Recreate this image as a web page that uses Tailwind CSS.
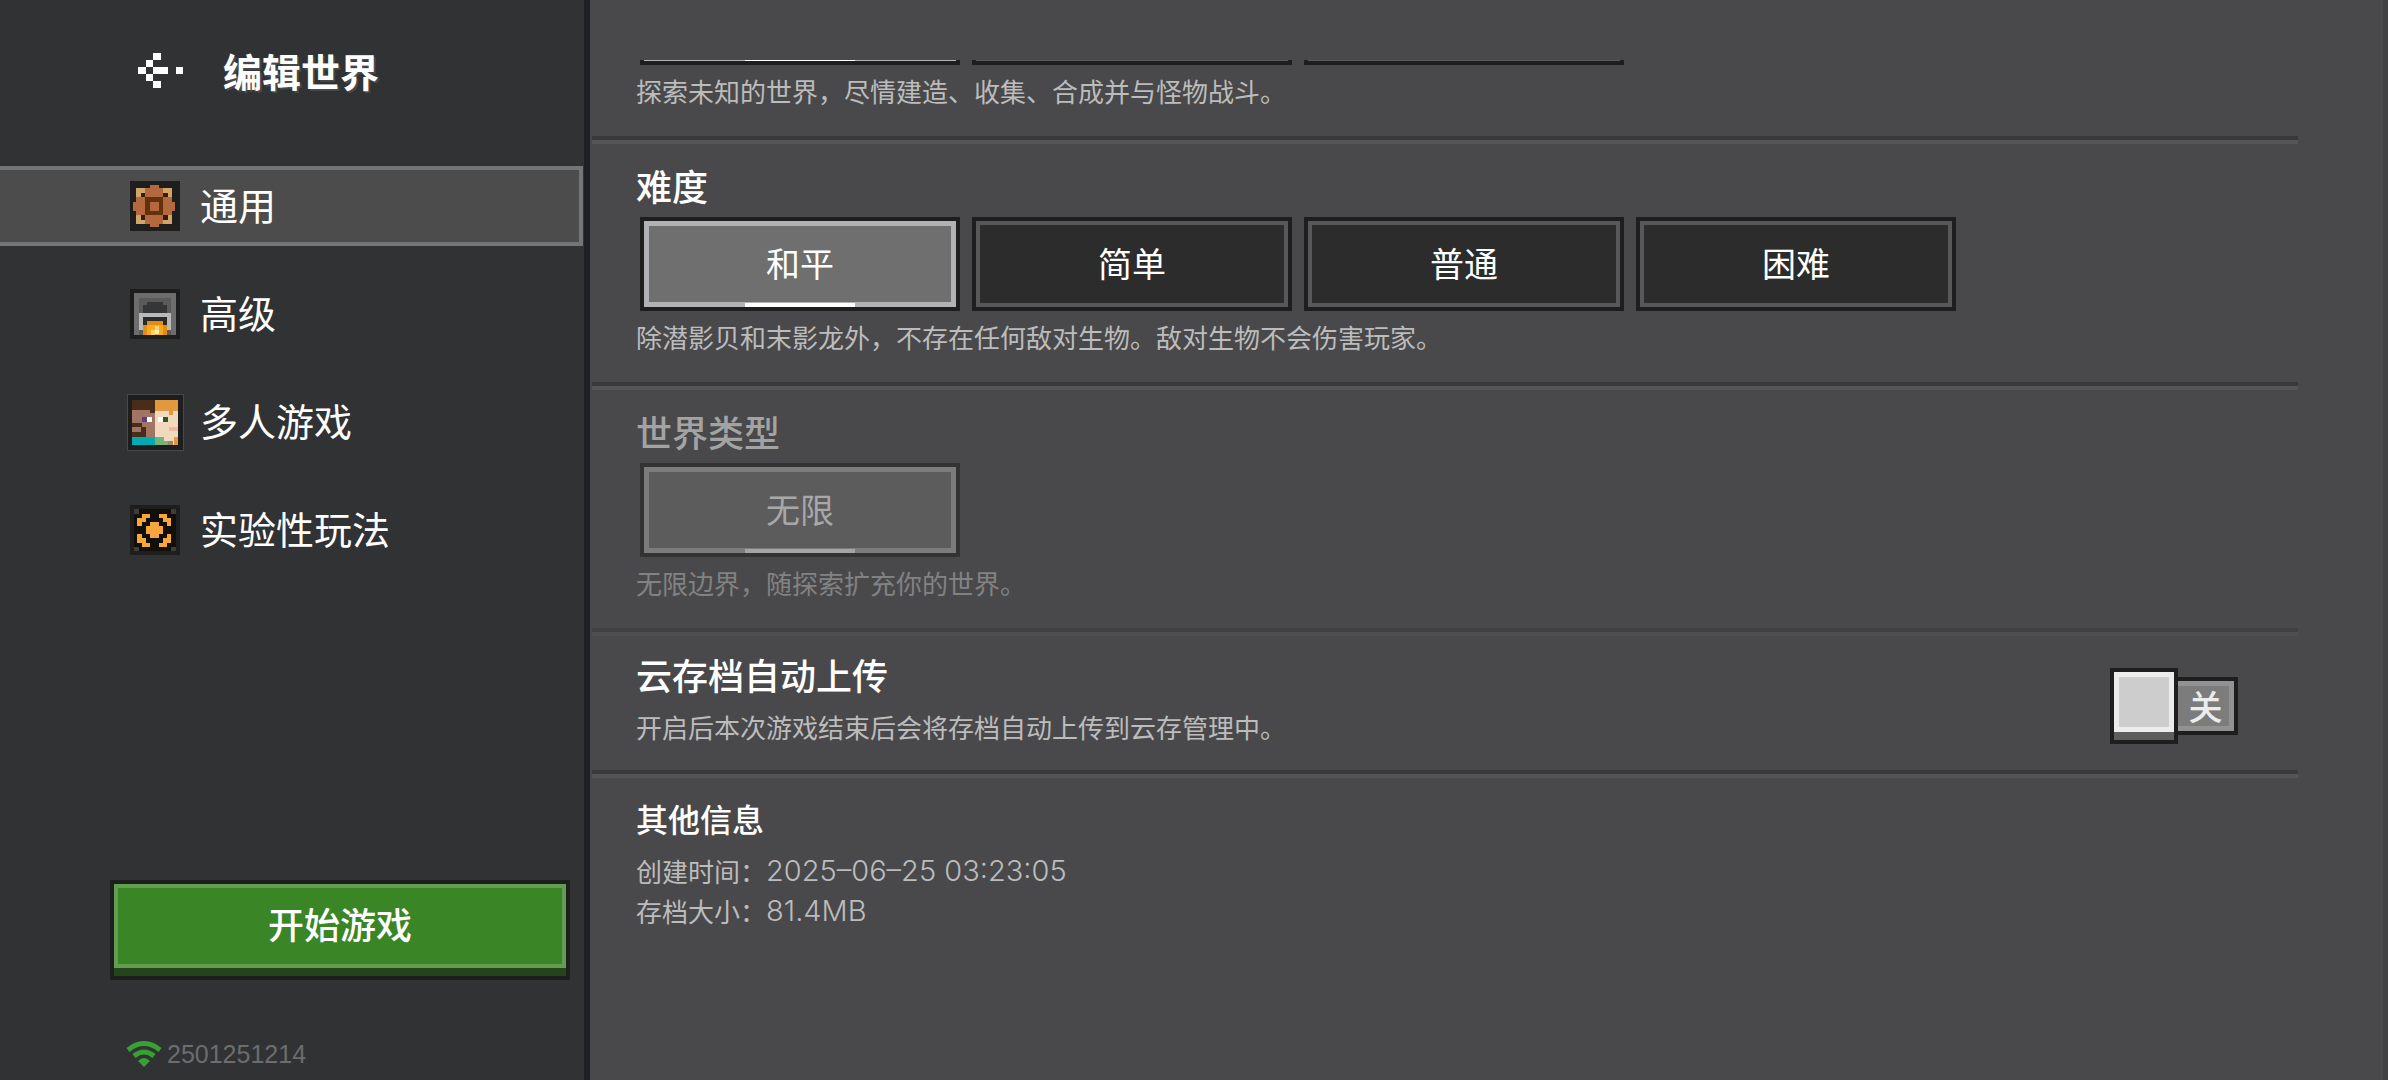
<!doctype html>
<html lang="zh-CN">
<head>
  <meta charset="utf-8"/>
  <meta content="width=device-width, initial-scale=1.0" name="viewport"/>
  <title>编辑世界</title>
  <script src="https://cdn.jsdelivr.net/npm/@tailwindcss/browser@4"></script>
  <style>
    body {
      font-family: 'Noto Sans CJK SC', sans-serif;
    }
  </style>
</head>
<body class="bg-[#49494b] text-white">
  <div class="flex h-screen overflow-hidden">
    <!-- sidebar -->
    <aside class="flex w-[590px] shrink-0 flex-col border-r-6 border-[#1f2026] bg-[#313233]">
      <header class="flex items-center pt-[42px] pb-[68px] pl-[138px]">
        <button aria-label="返回" class="mr-10">
          <svg class="h-[35px] w-[45px]" viewBox="0 0 6 5" preserveAspectRatio="none" shape-rendering="crispEdges" fill="#fff">
            <path d="M2 0h1v1h-1zM1 1h1v1h-1zM0 2h1v1h-1zM2 2h2v1h-2zM5 2h1v1h-1zM1 3h1v1h-1zM2 4h1v1h-1z"/>
          </svg>
        </button>
        <h1 class="text-[39px] leading-14 font-bold [text-shadow:2px_2px_0_#47484a]">编辑世界</h1>
      </header>
      <nav class="flex flex-col gap-7 text-[38px]">
        <a class="mr-px flex h-20 items-center border-y-4 border-r-4 border-[#747575] bg-[#4c4c4c] pl-[130px]" href="#">
          <svg class="mr-5 size-[50px]" viewBox="0 0 150 150" shape-rendering="crispEdges">
            <path fill="#1e1e1e" d="M0 0h150v150H0z"/>
            <path fill="#21140b" d="M18 22h108v108H18z"/>
            <path fill="#d1a567" d="M18 22h27v14H32v13H18zM99 22h27v27h-13V36H99zM18 103h14v13h13v14H18zM113 103h13v27H99v-14h14z"/>
            <path fill="#b3683d" d="M59 13h27v9h13v27h27v13h8v28h-8v13H99v27H86v9H59v-9H45v-27H18V90H8V62h10V49h27V22h14z"/>
            <path fill="#3a1a0a" d="M32 36h13v13H32zM99 36h14v13H99zM32 103h13v13H32zM99 103h14v13H99z"/>
            <path fill="#64310f" d="M45 49h54v54H45z"/>
            <path fill="#b3683d" d="M59 62h27v28H59z"/>
          </svg>
          <span class="pb-1.5">通用</span>
        </a>
        <a class="flex h-20 items-center pl-[130px]" href="#">
          <svg class="mr-5 size-[50px]" viewBox="0 0 150 150" shape-rendering="crispEdges">
            <path fill="#1e1e1e" d="M0 0h150v150H0z"/>
            <path fill="#6d6d6d" d="M12 12h126v126H12z"/>
            <path fill="#5a5a5a" d="M26 26h98v112H26z"/>
            <path fill="#353637" d="M51 39h47v10h14v24H38V49h13z"/>
            <path fill="#b9b9b9" d="M27 73h96v50h-11V85H38v38H27z"/>
            <path fill="#2a2a2b" d="M38 85h74v53H38z"/>
            <path fill="#e58d12" d="M51 97h47v12h14v29H38v-29h13z"/>
            <path fill="#f7ab25" d="M51 109h47v29H51z"/>
            <path fill="#ffd468" d="M62 122h12v-11h12v11h-12v16H62z"/>
            <path fill="#fff0b8" d="M74 122h12v12H74z"/>
          </svg>
          <span class="pb-1.5">高级</span>
        </a>
        <a class="flex h-20 items-center pl-[127px]" href="#">
          <svg class="mr-4 size-[57px]" viewBox="0 0 171 171" shape-rendering="crispEdges">
            <path fill="#474849" d="M0 0h171v171H0z"/>
            <path fill="#1e1e1e" d="M3 3h165v165H3z"/>
            <path fill="#a07562" d="M16 17h69v111H16z"/>
            <path fill="#4a2c1a" d="M16 17h69v41H70V47H16zM16 86h30v12H16zM42 98h14v30H16v-15h26z"/>
            <path fill="#5d3b8e" d="M46 70h14v15H46z"/>
            <path fill="#fff" d="M60 70h16v15H60z"/>
            <path fill="#00abb1" d="M16 128h69v26H16z"/>
            <path fill="#f0d9bd" d="M85 17h69v137H85z"/>
            <path fill="#e1983f" d="M85 17h69v33h-15v12h-13V50H85zM140 128h14v26h-14z"/>
            <path fill="#fff" d="M92 70h16v15H92z"/>
            <path fill="#2f5b1b" d="M108 70h16v15h-16z"/>
            <path fill="#edb8a4" d="M126 98h28v14h-28z"/>
            <path fill="#77b276" d="M85 128h25v14h14v12H85z"/>
            <path fill="#9b8763" d="M124 142h14v12h-14z"/>
          </svg>
          <span class="pb-1.5">多人游戏</span>
        </a>
        <a class="flex h-20 items-center pl-[130px]" href="#">
          <svg class="mr-5 size-[50px]" viewBox="0 0 150 150" shape-rendering="crispEdges">
            <path fill="#1e1e1e" d="M0 0h150v150H0z"/>
            <path fill="#120e09" d="M26 13h98v13h14v99h-14v14H26v-14H12V26h14z"/>
            <path fill="#3f3d38" d="M12 13h15v15H12zM124 13h14v15h-14zM12 125h15v14H12zM124 125h14v14h-14z"/>
            <path fill="#f7a63b" d="M36 28h25v11H49v13H37v12H22V39h14zM86 28h25v11h13v25h-14V52H98V39H86zM22 88h15v12h12v13h12v12H36v-12H22zM110 88h14v25h-13v12H86v-12h12v-13h12zM59 52h27v12h12v24H86v12H59V88H47V64h12z"/>
          </svg>
          <span class="pb-1.5">实验性玩法</span>
        </a>
      </nav>
      <button class="mt-auto mr-[14px] ml-[110px] border-4 border-[#1d1f1c] bg-[#24451c] pb-2">
        <span class="flex h-[84px] items-center justify-center border-4 border-[#639d52] bg-[#3a8526] pb-1.5 text-4xl font-medium">开始游戏</span>
      </button>
      <footer class="mt-14 flex items-center gap-[5px] pb-2 pl-[126px] font-['Liberation_Sans'] text-[25px] leading-9 text-[#6c6d6e]">
        <svg class="h-[26px] w-9" viewBox="0 0 36 26" fill="none" stroke="#38a133">
          <path stroke-width="5" d="M2 9Q18 -4 34 9"/>
          <path stroke-width="5" d="M8 15Q18 7 28 15"/>
          <path fill="#38a133" stroke="none" d="M12 20Q18 14 24 20L18 26z"/>
        </svg>
        2501251214
      </footer>
    </aside>

    <!-- settings -->
    <main class="min-w-0 flex-1 border-r-5 border-[#414143] pt-15 pr-[85px] pl-0.5">
      <div class="h-full overflow-hidden">
        <section class="-mt-[89px] pb-[25px] pl-11">
          <div class="ml-1 flex gap-3">
            <label class="relative flex h-[94px] w-80 border-4 border-[#1e1e1f] bg-[#6f6f70]">
              <input aria-label="生存" checked class="sr-only" name="mode" type="radio"/>
              <span class="flex-1 border-5 border-[#b1b2b5]"></span>
              <span class="absolute bottom-0 left-1/2 h-1 w-[110px] -translate-x-1/2 bg-white"></span>
            </label>
            <label class="relative flex h-[94px] w-80 border-4 border-[#1e1e1f] bg-[#2c2c2d]">
              <input aria-label="创造" class="sr-only" name="mode" type="radio"/>
              <span class="flex-1 border-4 border-[#58585a]"></span>
            </label>
            <label class="relative flex h-[94px] w-80 border-4 border-[#1e1e1f] bg-[#2c2c2d]">
              <input aria-label="冒险" class="sr-only" name="mode" type="radio"/>
              <span class="flex-1 border-4 border-[#58585a]"></span>
            </label>
          </div>
          <p class="mt-1.5 text-[26px] leading-10 text-[#bcbcbd]">探索未知的世界，尽情建造、收集、合成并与怪物战斗。</p>
        </section>

        <section class="border-t-4 border-[#38393a]">
          <div class="border-t-4 border-[#555557] pt-4 pb-[25px] pl-11">
            <h2 class="text-4xl/[50px] font-medium">难度</h2>
            <div class="mt-[7px] ml-1 flex gap-3 text-[34px]">
              <label class="relative flex h-[94px] w-80 border-4 border-[#1e1e1f] bg-[#6f6f70]">
                <input checked class="sr-only" name="difficulty" type="radio"/>
                <span class="flex flex-1 items-center justify-center border-5 border-[#b1b2b5] pb-1">和平</span>
                <span class="absolute bottom-0 left-1/2 h-1 w-[110px] -translate-x-1/2 bg-white"></span>
              </label>
              <label class="relative flex h-[94px] w-80 border-4 border-[#1e1e1f] bg-[#2c2c2d]">
                <input class="sr-only" name="difficulty" type="radio"/>
                <span class="flex flex-1 items-center justify-center border-4 border-[#58585a] pb-1">简单</span>
              </label>
              <label class="relative flex h-[94px] w-80 border-4 border-[#1e1e1f] bg-[#2c2c2d]">
                <input class="sr-only" name="difficulty" type="radio"/>
                <span class="flex flex-1 items-center justify-center border-4 border-[#58585a] pb-1">普通</span>
              </label>
              <label class="relative flex h-[94px] w-80 border-4 border-[#1e1e1f] bg-[#2c2c2d]">
                <input class="sr-only" name="difficulty" type="radio"/>
                <span class="flex flex-1 items-center justify-center border-4 border-[#58585a] pb-1">困难</span>
              </label>
            </div>
            <p class="mt-1.5 text-[26px] leading-10 text-[#bcbcbd]">除潜影贝和末影龙外，不存在任何敌对生物。敌对生物不会伤害玩家。</p>
          </div>
        </section>

        <section class="border-t-4 border-[#38393a]">
          <div class="border-t-4 border-[#555557] pt-4 pb-[25px] pl-11">
            <h2 class="text-4xl/[50px] font-medium text-[#a3a3a4]">世界类型</h2>
            <div class="mt-[7px] ml-1 flex gap-3 text-[34px] text-[#a8a8a9]">
              <label class="relative flex h-[94px] w-80 border-4 border-[#333334] bg-[#5c5c5c]">
                <input checked class="sr-only" disabled name="world-type" type="radio"/>
                <span class="flex flex-1 items-center justify-center border-5 border-[#7c7c7c] pb-1">无限</span>
                <span class="absolute bottom-0 left-1/2 h-1 w-[110px] -translate-x-1/2 bg-[#a5a5a5]"></span>
              </label>
            </div>
            <p class="mt-1.5 text-[26px] leading-10 text-[#828283]">无限边界，随探索扩充你的世界。</p>
          </div>
        </section>

        <section class="border-t-4 border-[#404042]">
          <div class="flex items-center justify-between border-t-4 border-[#4f4f51] pt-[13px] pr-15 pb-[23px] pl-11">
            <div>
              <h2 class="text-4xl/[50px] font-medium" id="upload-title">云存档自动上传</h2>
              <p class="mt-2 text-[26px] leading-10 text-[#bcbcbd]">开启后本次游戏结束后会将存档自动上传到云存管理中。</p>
            </div>
            <label class="relative mt-4 flex items-center">
              <input aria-labelledby="upload-title" class="sr-only" role="switch" type="checkbox"/>
              <span class="h-[76px] w-[68px] border-4 border-[#1e1e1f] bg-[#5d5d5e]">
                <span class="block h-15 border-5 border-[#ececec] bg-[#cdcdcd]"></span>
              </span>
              <span class="flex h-[58px] w-15 border-4 border-l-0 border-[#1e1e1f]">
                <span class="flex flex-1 items-center justify-center border-5 border-l-0 border-[#929292] bg-[#7c7c7c] pl-1 text-[34px] leading-10 font-medium text-[#ececec]">关</span>
              </span>
            </label>
          </div>
        </section>

        <section class="border-t-4 border-[#38393a]">
          <div class="border-t-4 border-[#555557] pt-[15px] pl-11">
            <h2 class="text-[32px] leading-[50px] font-medium">其他信息</h2>
            <dl class="mt-2 grid grid-cols-[auto_1fr] text-[26px] leading-10 text-[#bcbcbd]">
              <dt>创建时间：</dt>
              <dd class="font-['Inter'] text-[29px] font-light">2025–06–25 03:23:05</dd>
              <dt>存档大小：</dt>
              <dd class="font-['Inter'] text-[29px] font-light">81.4MB</dd>
            </dl>
          </div>
        </section>
      </div>
    </main>
  </div>
</body>
</html>
